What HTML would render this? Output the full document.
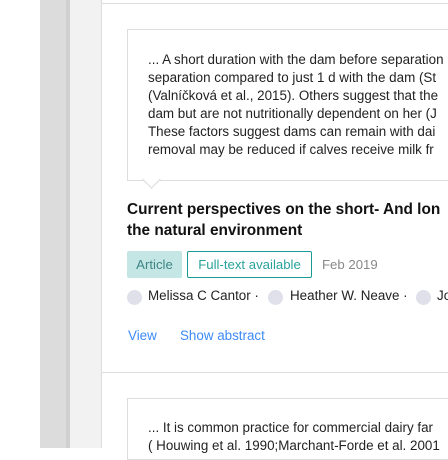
<!DOCTYPE html><html><head><style>
body{margin:0;width:448px;height:448px;overflow:hidden;background:#fff;font-family:"Liberation Sans",Arial,sans-serif;position:relative}
.a{position:absolute}
.q{font-size:13.4px;color:#222;line-height:18px;white-space:nowrap}
.c{width:15px;height:15px;border-radius:50%;background:#e0e0ea}
.n{font-size:13.4px;color:#222;white-space:nowrap}
</style></head><body>
<div class="a" style="left:40px;top:0;width:30px;height:448px;background:#dcdcdc"></div>
<div class="a" style="left:66px;top:0;width:4px;height:448px;background:#d0d0d0"></div>
<div class="a" style="left:70px;top:0;width:31px;height:448px;background:#f2f2f2"></div>
<div class="a" style="left:101px;top:0;width:347px;height:448px;background:#fff;border-left:1px solid #ddd"></div>
<div class="a" style="left:101px;top:3px;width:347px;height:1px;background:#ddd"></div>
<div class="a" style="left:127px;top:29px;width:330px;height:150px;border:1px solid #ddd;border-right:none;background:#fff"></div>
<div class="a" style="left:145px;top:173px;width:12px;height:12px;background:#fff;border-right:1px solid #ddd;border-bottom:1px solid #ddd;transform:rotate(45deg)"></div>
<div class="a q" style="left:148px;top:51px">... A short duration with the dam before separation<br>separation compared to just 1 d with the dam (St<br>(Valníčková et al., 2015). Others suggest that the<br>dam but are not nutritionally dependent on her (J<br>These factors suggest dams can remain with dai<br>removal may be reduced if calves receive milk fr</div>
<div class="a" style="left:127px;top:199px;font-size:15.4px;font-weight:bold;color:#111;line-height:21px;white-space:nowrap">Current perspectives on the short- And lon<br>the natural environment</div>
<div class="a" style="left:127px;top:251px;width:55px;height:27px;background:#c4e6e4;border-radius:2px;color:#3d8585;font-size:13.2px;line-height:27px;text-align:center">Article</div>
<div class="a" style="left:187px;top:251px;width:123px;height:25px;border:1px solid #1a9a94;border-radius:2px;color:#2aa29c;font-size:13.2px;line-height:25px;text-align:center">Full-text available</div>
<div class="a" style="left:322px;top:251px;color:#888;font-size:13.2px;line-height:27px">Feb 2019</div>
<div class="a c" style="left:127px;top:290px"></div>
<div class="a n" style="left:148px;top:288px">Melissa C Cantor ·</div>
<div class="a c" style="left:268px;top:290px"></div>
<div class="a n" style="left:290px;top:288px">Heather W. Neave ·</div>
<div class="a c" style="left:416px;top:290px"></div>
<div class="a n" style="left:437px;top:288px">Jo</div>
<div class="a" style="left:128px;top:328px;font-size:13.4px;color:#3d8af7">View</div>
<div class="a" style="left:180px;top:328px;font-size:13.4px;color:#3d8af7">Show abstract</div>
<div class="a" style="left:101px;top:372px;width:347px;height:1px;background:#ddd"></div>
<div class="a" style="left:127px;top:398px;width:330px;height:60px;border:1px solid #ddd;border-right:none"></div>
<div class="a q" style="left:148px;top:419px">... It is common practice for commercial dairy far<br>( Houwing et al. 1990;Marchant-Forde et al. 2001</div>
</body></html>
